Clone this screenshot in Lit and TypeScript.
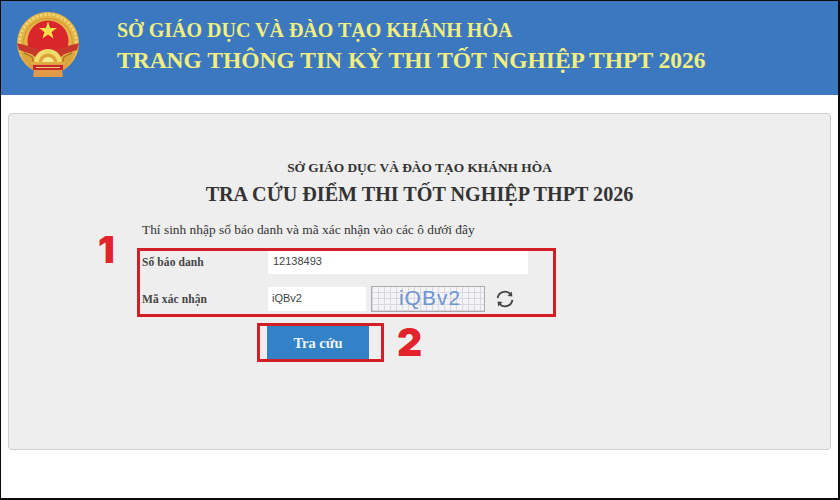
import { LitElement, html, css, svg } from "lit";
import { customElement } from "lit/decorators.js";

const emblem = svg`<svg class="emblem" viewBox="0 0 64 66" width="64" height="66" aria-hidden="true">
  <circle cx="32" cy="31" r="31" fill="#e4b548"/>
  <circle cx="32" cy="31" r="28.5" fill="none" stroke="#f3d979" stroke-width="2.4" stroke-dasharray="2.4 1.8"/>
  <circle cx="32" cy="31" r="24.5" fill="none" stroke="#d99f37" stroke-width="1.6"/>
  <circle cx="32" cy="29" r="20.5" fill="#d9252b"/>
  <polygon fill="#f7e24c" points="32,9.5 34.2,16 41,16 35.5,20 37.6,26.5 32,22.5 26.4,26.5 28.5,20 23,16 29.8,16"/>
  <path d="M1 31 L20 36 L26 40 L24 45 L15 42 L3 38Z" fill="#c8382a"/>
  <path d="M63 31 L44 36 L38 40 L40 45 L49 42 L61 38Z" fill="#c8382a"/>
  <path d="M4 39 L15 43 L21 47 L20 58 L12 54 L7 47Z" fill="#dca53b"/>
  <path d="M60 39 L49 43 L43 47 L44 58 L52 54 L57 47Z" fill="#dca53b"/>
  <path d="M8 41 L16 45 L18 52 M56 41 L48 45 L46 52" fill="none" stroke="#a8702a" stroke-width="1.2"/>
  <path d="M18 51 A14 14 0 0 1 46 51Z" fill="#f4dc6c"/>
  <path d="M22.5 51 A9.5 9.5 0 0 1 41.5 51Z" fill="#dca53b"/>
  <path d="M26 51 A6 6 0 0 1 38 51Z" fill="#f8e88f"/>
  <rect x="15" y="50" width="34" height="2.4" fill="#e2ad3f"/>
  <path d="M13 52 H51 L48 58 H46 L47 65 H17 L18 58 H16Z" fill="#e09a48"/>
  <rect x="17" y="53" width="30" height="5" fill="#c72a2a"/>
  <rect x="20" y="55" width="24" height="1" fill="#eec87a"/>
</svg>`;

const refresh = svg`<svg class="refresh" viewBox="0 0 18 18" width="18" height="18" aria-hidden="true">
  <path d="M1.6 8.2 A7.4 7.4 0 0 1 14.2 3.9" fill="none" stroke="#454545" stroke-width="1.8"/>
  <path d="M16.4 9.8 A7.4 7.4 0 0 1 3.8 14.1" fill="none" stroke="#454545" stroke-width="1.8"/>
  <polygon points="11.4,6 16.4,6.6 15.8,1.6" fill="#454545"/>
  <polygon points="6.6,12 1.6,11.4 2.2,16.4" fill="#454545"/>
</svg>`;

@customElement("app-root")
export class AppRoot extends LitElement {
  static styles = css`
    :host {
      display: block;
      position: relative;
      width: 840px;
      height: 500px;
      box-sizing: border-box;
      background: #fff;
      border: solid #0b0b0b;
      border-width: 1px 2px 2px 1px;
      overflow: hidden;
      font-family: "Liberation Serif", serif;
      color: #333;
    }
    .banner {
      height: 94px;
      background: #3c78c0;
      display: flex;
      align-items: flex-start;
      padding: 11px 0 0 15px;
      box-sizing: border-box;
    }
    .emblem { flex: none; display: block; }
    .titles {
      margin-left: 37px;
      padding-top: 4px;
      color: #f2ef7e;
      font-weight: 700;
      white-space: nowrap;
    }
    .titles .t1 { font-size: 20px; line-height: 28px; }
    .titles .t2 { font-size: 23.5px; line-height: 32px; }
    .card {
      margin: 18px 0 0 7px;
      width: 823px;
      height: 337px;
      box-sizing: border-box;
      background: #eeeeee;
      border: 1px solid #cfcfcf;
      border-radius: 4px;
      padding-top: 45px;
    }
    .org {
      text-align: center;
      font-size: 13.4px;
      line-height: 18px;
      font-weight: 700;
      color: #333;
    }
    .head {
      text-align: center;
      font-size: 20.15px;
      line-height: 26px;
      font-weight: 700;
      color: #333;
      margin-top: 4px;
    }
    .form {
      margin: 14px 0 0 133px;
    }
    .hint { font-size: 13.4px; line-height: 18px; color: #333; }
    .row { display: flex; align-items: center; }
    .row.r1 { margin-top: 11px; }
    .row.r2 { margin-top: 12px; }
    .row label {
      width: 126px;
      font-size: 11.5px;
      font-weight: 700;
      letter-spacing: 0.1px;
      color: #444;
    }
    .input {
      height: 24px;
      box-sizing: border-box;
      background: #fff;
      font-family: "Liberation Sans", sans-serif;
      font-size: 11px;
      color: #444;
      line-height: 23px;
      padding-left: 5px;
    }
    .i1 { width: 260px; }
    .i2 { width: 98px; padding-left: 4px; }
    .captcha {
      margin-left: 5px;
      width: 114px;
      height: 26px;
      box-sizing: border-box;
      border: 1px solid #aaa;
      background-color: #f4f4f6;
      background-image:
        repeating-linear-gradient(90deg, #d8d8e0 0 1px, transparent 1px 6px),
        repeating-linear-gradient(0deg, #d8d8e0 0 1px, transparent 1px 6px);
      text-align: center;
      color: #6f94d2;
      font-family: "Liberation Sans", sans-serif;
      font-size: 21px;
      font-weight: 400;
      line-height: 22px;
      letter-spacing: 1px;
      padding-left: 4px;
      overflow: hidden;
    }
    .refresh { margin-left: 11px; flex: none; display: block; }
    .btn {
      display: block;
      margin: 14px 0 0 125px;
      width: 102px;
      height: 34px;
      border: 0;
      padding: 0;
      background: #3382c8;
      color: #f2f7fb;
      font-family: "Liberation Serif", serif;
      font-size: 14.5px;
      font-weight: 700;
    }
    .mark { position: absolute; border: 3px solid #d21f27; box-sizing: border-box; pointer-events: none; }
    .m1 { left: 136px; top: 247px; width: 419px; height: 69px; }
    .m2 { left: 256px; top: 322px; width: 127px; height: 39px; }
    .num {
      position: absolute;
      color: #e2232b;
      font-family: "Inter", sans-serif;
      font-weight: 900;
      line-height: 1;
    }
    .n1 { left: 97px; top: 230px; font-size: 37px; }
    .n2 { left: 396px; top: 321px; font-size: 39px; }
  `;

  render() {
    return html`
      <header class="banner">
        ${emblem}
        <div class="titles">
          <div class="t1">SỞ GIÁO DỤC VÀ ĐÀO TẠO KHÁNH HÒA</div>
          <div class="t2">TRANG THÔNG TIN KỲ THI TỐT NGHIỆP THPT 2026</div>
        </div>
      </header>
      <main class="card">
        <div class="org">SỞ GIÁO DỤC VÀ ĐÀO TẠO KHÁNH HÒA</div>
        <div class="head">TRA CỨU ĐIỂM THI TỐT NGHIỆP THPT 2026</div>
        <div class="form">
          <div class="hint">Thí sinh nhập số báo danh và mã xác nhận vào các ô dưới đây</div>
          <div class="row r1"><label>Số báo danh</label><div class="input i1">12138493</div></div>
          <div class="row r2">
            <label>Mã xác nhận</label>
            <div class="input i2">iQBv2</div>
            <div class="captcha">iQBv2</div>
            ${refresh}
          </div>
          <button class="btn">Tra cứu</button>
        </div>
      </main>
      <div class="mark m1"></div>
      <div class="mark m2"></div>
      <div class="num n1">1</div>
      <div class="num n2">2</div>
    `;
  }
}
